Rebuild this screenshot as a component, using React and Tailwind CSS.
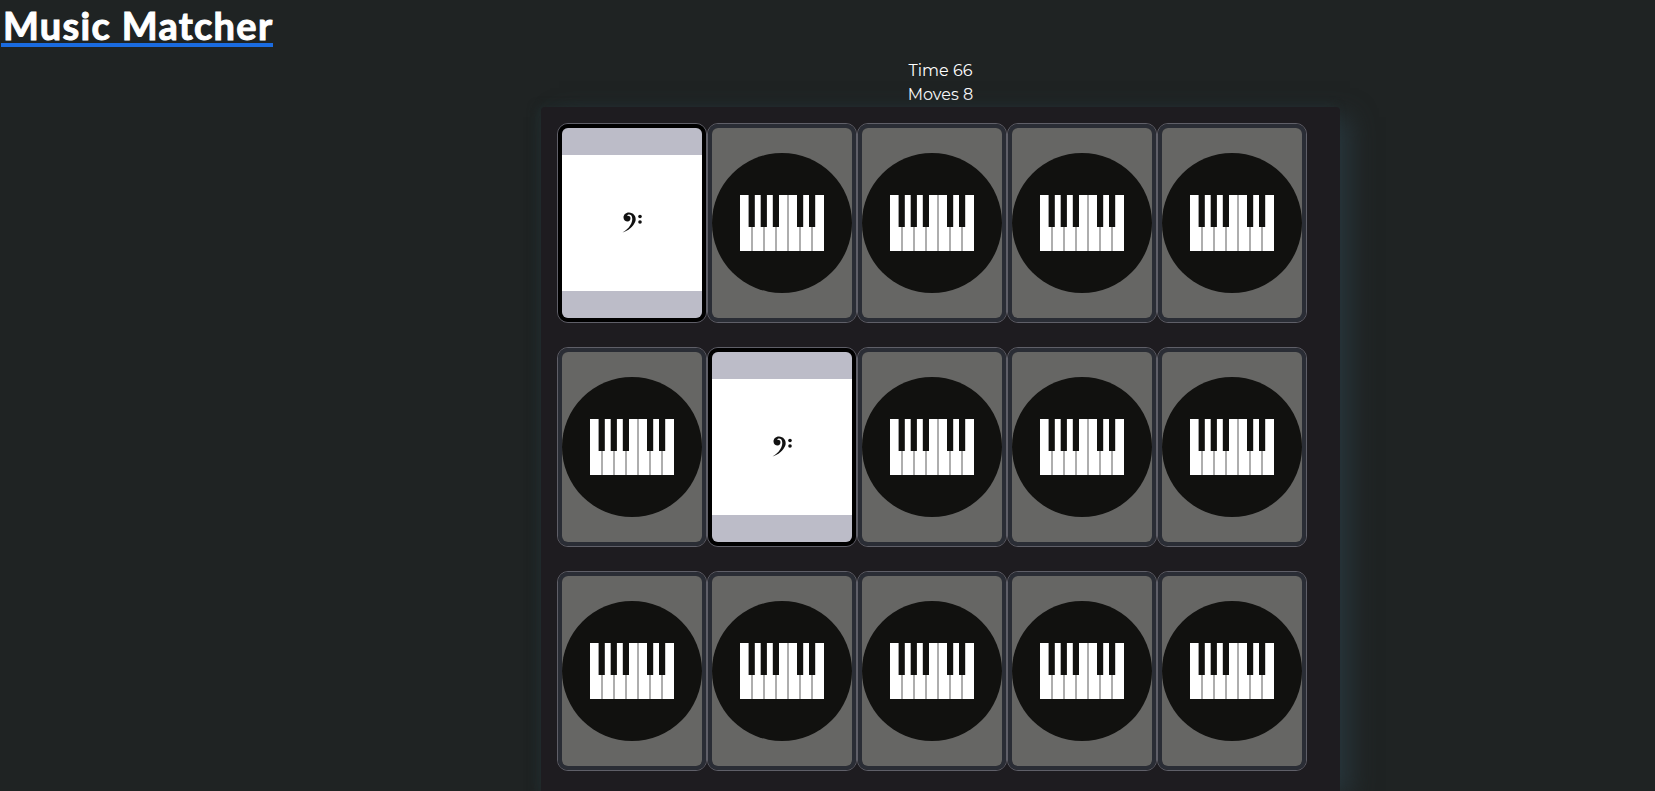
const cards = [true, false, false, false, false, false, true, false, false, false, false, false, false, false, false];

const whiteLines = [12, 24, 36, 48, 60, 72];
const blackKeys = [8.6, 20.7, 32.8, 57, 69];

const PianoIcon = () => (
    <svg viewBox="0 0 140 140" className="block w-[140px] h-[140px]">
        <circle cx="70" cy="70" r="70" fill="#11110f" />
        <rect x="28" y="42" width="84" height="56" fill="#ffffff" />
        {whiteLines.map((x) => (
            <rect key={x} x={27.3 + x} y="42" width="1.4" height="56" fill="#8c8c8c" />
        ))}
        {blackKeys.map((x) => (
            <rect key={x} x={28 + x} y="42" width="6.2" height="32" fill="#11110f" />
        ))}
    </svg>
);

const BassClef = () => (
    <svg viewBox="0 0 24 24" className="block w-6 h-6 ml-1 blur-[0.5px]">
        <path d="M0.5 21.5C6 20 11.5 15.5 13.5 10C14.5 5 11 1.5 7 1.5C3.5 1.5 1.5 4 1.5 6.5C1.5 9 3.5 10.5 5.5 10.5C7.5 10.5 8.5 9 8.5 7C8.5 5 6 4.5 5 5C6 3 9 3 10 6C11.5 11 7 18 0.5 21.5Z" fill="#111111" />
        <circle cx="18" cy="5.5" r="1.8" fill="#111111" />
        <circle cx="18" cy="11" r="1.8" fill="#111111" />
    </svg>
);

const Card = ({ flipped }) => {
    return (
        <div className="w-[150px] h-[200px] rounded-[11px] border border-[#5f5f68]">
            <div className={`w-full h-full rounded-[10px] border-4 ${flipped ? 'border-black' : 'border-[#2a2d35]'}`}>
                {flipped ? (
                    <div className="w-full h-full rounded-md overflow-hidden bg-[#bcbcc8] flex items-center">
                        <div className="w-full h-[136px] bg-white flex items-center justify-center">
                            <BassClef />
                        </div>
                    </div>
                ) : (
                    <div className="w-full h-full rounded-md overflow-hidden bg-[#666664] flex items-center justify-center">
                        <PianoIcon />
                    </div>
                )}
            </div>
        </div>
    );
};

const App = () => {
    return (
        <div className="h-screen overflow-hidden bg-[#1f2323] text-white font-['Montserrat','Open_Sans',sans-serif]">
            <h1 className="inline-block ml-px pl-0.5 pt-2 border-b-4 border-[#1a6be0] text-[38px] leading-[35px] font-bold tracking-[1.3px] font-['Lato',sans-serif] [-webkit-text-stroke:1px_white]">
                Music Matcher
            </h1>
            <div className="flex flex-col items-center mt-3 pl-[226px]">
                <p className="text-base leading-6 text-center">Time 66</p>
                <p className="text-base leading-6 text-center">Moves 8</p>
                <div className="w-[799px] pt-4 pl-4 pb-6 bg-[#1e1c20] rounded-sm grid grid-cols-[repeat(5,150px)] gap-y-6 shadow-[14px_6px_24px_-4px_#28363c,-4px_0_10px_#212b2c]">
                    {cards.map((flipped, i) => (
                        <Card key={i} flipped={flipped} />
                    ))}
                </div>
            </div>
        </div>
    );
};

export default App;
